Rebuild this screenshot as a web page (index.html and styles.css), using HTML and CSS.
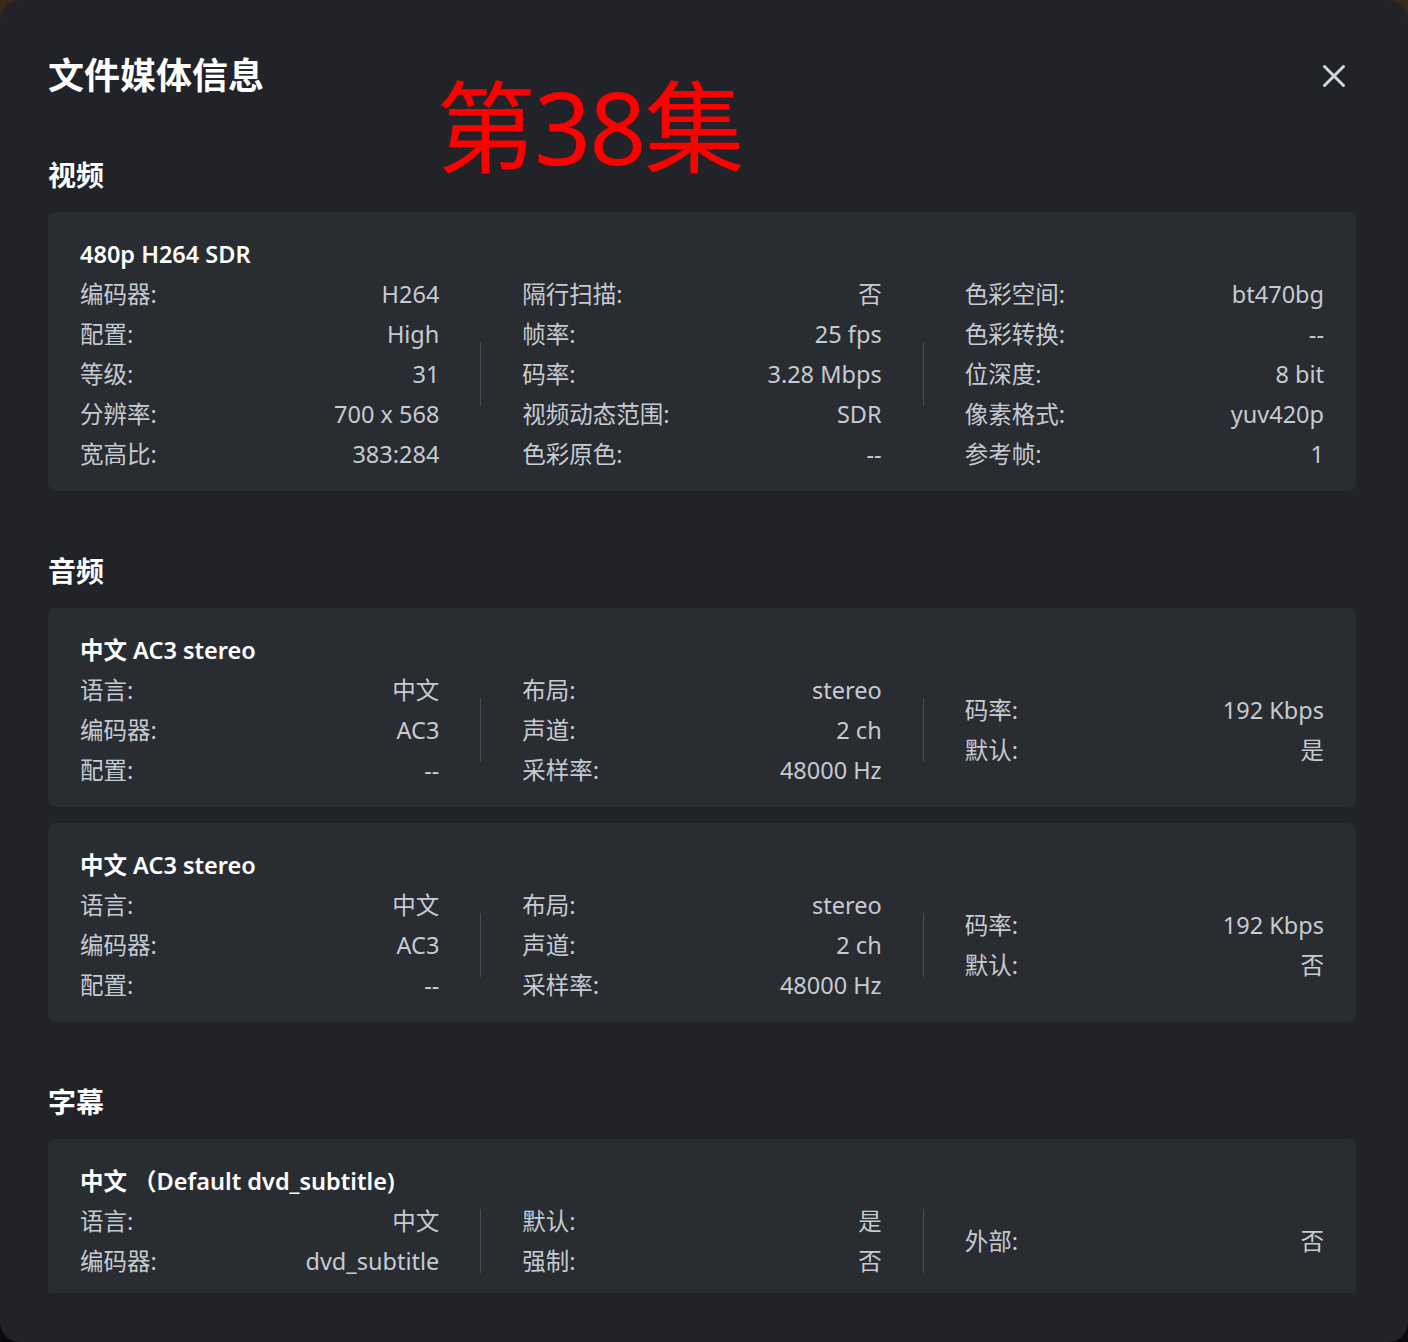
FILE: index.html
```html
<!DOCTYPE html>
<html lang="zh-CN">
<head>
  <meta charset="UTF-8">
  <meta name="viewport" content="width=device-width, initial-scale=1.0">
  <title>文件媒体信息</title>
  <link rel="stylesheet" href="styles.css">
</head>
<body>
  <div class="dialog">
    <div class="dialog-header">
      <h1>文件媒体信息</h1>
      <button class="close-btn" aria-label="关闭">
        <svg width="24" height="24" viewBox="0 0 24 24"><path d="M2.5 2.5L21.5 21.5M21.5 2.5L2.5 21.5" stroke="currentColor" stroke-width="3" stroke-linecap="round"/></svg>
      </button>
    </div>

    <div class="episode-mark">第38集</div>

    <div class="dialog-body">
      <!-- 视频 -->
      <div class="section">
        <h2>视频</h2>
        <div class="stream-card">
          <div class="stream-title">480p H264 SDR</div>
          <div class="stream-grid">
            <div class="stream-col">
              <div class="info-row"><span>编码器:</span><span>H264</span></div>
              <div class="info-row"><span>配置:</span><span>High</span></div>
              <div class="info-row"><span>等级:</span><span>31</span></div>
              <div class="info-row"><span>分辨率:</span><span>700 x 568</span></div>
              <div class="info-row"><span>宽高比:</span><span>383:284</span></div>
            </div>
            <div class="divider"></div>
            <div class="stream-col">
              <div class="info-row"><span>隔行扫描:</span><span>否</span></div>
              <div class="info-row"><span>帧率:</span><span>25 fps</span></div>
              <div class="info-row"><span>码率:</span><span>3.28 Mbps</span></div>
              <div class="info-row"><span>视频动态范围:</span><span>SDR</span></div>
              <div class="info-row"><span>色彩原色:</span><span>--</span></div>
            </div>
            <div class="divider"></div>
            <div class="stream-col">
              <div class="info-row"><span>色彩空间:</span><span>bt470bg</span></div>
              <div class="info-row"><span>色彩转换:</span><span>--</span></div>
              <div class="info-row"><span>位深度:</span><span>8 bit</span></div>
              <div class="info-row"><span>像素格式:</span><span>yuv420p</span></div>
              <div class="info-row"><span>参考帧:</span><span>1</span></div>
            </div>
          </div>
        </div>
      </div>

      <!-- 音频 -->
      <div class="section">
        <h2>音频</h2>
        <div class="stream-card">
          <div class="stream-title">中文 AC3 stereo</div>
          <div class="stream-grid">
            <div class="stream-col">
              <div class="info-row"><span>语言:</span><span>中文</span></div>
              <div class="info-row"><span>编码器:</span><span>AC3</span></div>
              <div class="info-row"><span>配置:</span><span>--</span></div>
            </div>
            <div class="divider"></div>
            <div class="stream-col">
              <div class="info-row"><span>布局:</span><span>stereo</span></div>
              <div class="info-row"><span>声道:</span><span>2 ch</span></div>
              <div class="info-row"><span>采样率:</span><span>48000 Hz</span></div>
            </div>
            <div class="divider"></div>
            <div class="stream-col">
              <div class="info-row"><span>码率:</span><span>192 Kbps</span></div>
              <div class="info-row"><span>默认:</span><span>是</span></div>
            </div>
          </div>
        </div>
        <div class="stream-card">
          <div class="stream-title">中文 AC3 stereo</div>
          <div class="stream-grid">
            <div class="stream-col">
              <div class="info-row"><span>语言:</span><span>中文</span></div>
              <div class="info-row"><span>编码器:</span><span>AC3</span></div>
              <div class="info-row"><span>配置:</span><span>--</span></div>
            </div>
            <div class="divider"></div>
            <div class="stream-col">
              <div class="info-row"><span>布局:</span><span>stereo</span></div>
              <div class="info-row"><span>声道:</span><span>2 ch</span></div>
              <div class="info-row"><span>采样率:</span><span>48000 Hz</span></div>
            </div>
            <div class="divider"></div>
            <div class="stream-col">
              <div class="info-row"><span>码率:</span><span>192 Kbps</span></div>
              <div class="info-row"><span>默认:</span><span>否</span></div>
            </div>
          </div>
        </div>
      </div>

      <!-- 字幕 -->
      <div class="section">
        <h2>字幕</h2>
        <div class="stream-card">
          <div class="stream-title">中文 （Default dvd_subtitle)</div>
          <div class="stream-grid">
            <div class="stream-col">
              <div class="info-row"><span>语言:</span><span>中文</span></div>
              <div class="info-row"><span>编码器:</span><span>dvd_subtitle</span></div>
            </div>
            <div class="divider"></div>
            <div class="stream-col">
              <div class="info-row"><span>默认:</span><span>是</span></div>
              <div class="info-row"><span>强制:</span><span>否</span></div>
            </div>
            <div class="divider"></div>
            <div class="stream-col">
              <div class="info-row"><span>外部:</span><span>否</span></div>
            </div>
          </div>
        </div>
      </div>
    </div>
  </div>
</body>
</html>
```

FILE: styles.css
```css
html {
  background: linear-gradient(to bottom, #3a2818 0%, #1a1512 40%, #0b0b0c 100%);
}
body {
  margin: 0;
  padding: 0;
  font-family: "Noto Sans", "Noto Sans CJK SC", sans-serif;
  color: #c6cad1;
}
.dialog {
  position: relative;
  height: 100vh;
  box-sizing: border-box;
  display: flex;
  flex-direction: column;
  background-color: #212329;
  border-radius: 20px;
  padding-bottom: 49px;
  overflow: hidden;
}
.dialog-header {
  display: flex;
  justify-content: space-between;
  align-items: center;
  padding: 52px 62px 0 48px;
}
.dialog-header h1 {
  margin: 0;
  font-size: 36px;
  line-height: 48px;
  font-weight: 700;
  color: #ffffff;
}
.close-btn {
  border: none;
  background: none;
  padding: 0;
  width: 24px;
  height: 24px;
  color: #d3d7dd;
  cursor: pointer;
}
.close-btn svg {
  display: block;
}
.episode-mark {
  position: absolute;
  left: 436px;
  top: 76px;
  font-size: 100px;
  line-height: 1;
  color: #ff0000;
  letter-spacing: -2px;
}
.dialog-body {
  flex: 1;
  min-height: 0;
  overflow: hidden;
  padding: 57px 52px 0 48px;
  display: flex;
  flex-direction: column;
  gap: 62px;
}
.section h2 {
  margin: 0 0 19px;
  font-size: 28px;
  line-height: 36px;
  font-weight: 700;
  color: #ffffff;
}
.stream-card {
  background-color: #292d32;
  border-radius: 8px;
  padding: 22px 32px 17px;
}
.stream-card + .stream-card {
  margin-top: 16px;
}
.stream-title {
  font-size: 23.5px;
  line-height: 40px;
  font-weight: 600;
  color: #ffffff;
}
.stream-grid {
  display: flex;
  align-items: center;
}
.stream-col {
  flex: 1;
}
.divider {
  width: 1px;
  height: 64px;
  margin: 0 41px;
  background-color: #474c54;
}
.info-row {
  display: flex;
  justify-content: space-between;
  font-size: 23.5px;
  line-height: 40px;
}
```
